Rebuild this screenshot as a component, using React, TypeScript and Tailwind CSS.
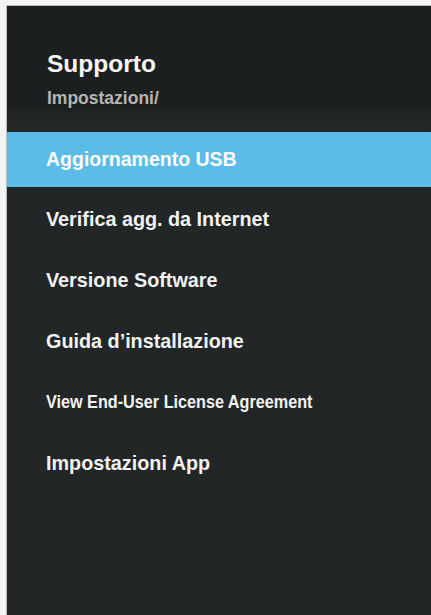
const items = [
  { label: "Verifica agg. da Internet" },
  { label: "Versione Software" },
  { label: "Guida d’installazione" },
  { label: "View End-User License Agreement", narrow: true },
  { label: "Impostazioni App" },
];

export default function App() {
  return (
    <div className="h-[615px] w-[431px] overflow-hidden bg-[#f4f4f4] pt-[5px] pl-[6px] font-['Liberation_Sans',Arial,sans-serif]">
      <div className="flex h-full flex-col border-t border-l border-[#b9b9b9] bg-[#222627]">
        {/* header */}
        <div className="h-[104px] bg-[#1c1f20] pt-[46px] pl-[40px]">
          <h1 className="text-[24.5px] leading-[24px] font-bold text-[#f7f7f7]">Supporto</h1>
          <p className="mt-[14px] text-[17.5px] leading-[17px] font-bold text-[#b4b4b4]">Impostazioni/</p>
        </div>
        <div className="h-[22px] bg-gradient-to-b from-[#1f2223] to-[#26292a]" />

        {/* selected */}
        <div className="flex h-[55px] items-center bg-[#5bbce8] pl-[39px]">
          <span className="text-[19.5px] font-bold text-white">Aggiornamento USB</span>
        </div>

        <div className="flex flex-col pt-[2px]">
          {items.map((item) => (
            <div key={item.label} className="flex h-[61px] items-center pl-[39px]">
              {item.narrow ? (
                <span className="origin-left scale-x-[0.9] text-[18px] font-bold whitespace-nowrap text-[#f2f2f2]">
                  {item.label}
                </span>
              ) : (
                <span className="text-[19.8px] font-bold text-[#f2f2f2]">{item.label}</span>
              )}
            </div>
          ))}
        </div>
      </div>
    </div>
  );
}
